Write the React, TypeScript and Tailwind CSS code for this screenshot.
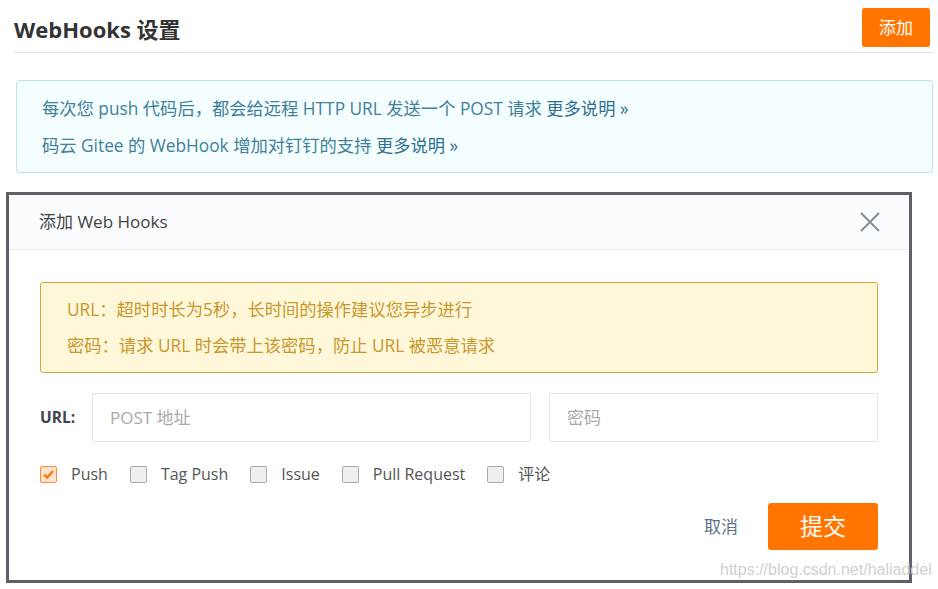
import React from "react";

const events = [
    { label: "Push", checked: true },
    { label: "Tag Push", checked: false },
    { label: "Issue", checked: false },
    { label: "Pull Request", checked: false },
    { label: "评论", checked: false },
];

function CheckBox({ checked }: { checked: boolean }) {
    if (checked) {
        return (
            <span className="flex h-[17px] w-[17px] items-center justify-center rounded-[2px] border border-[#ff8a3d] bg-[#ffe4cf]">
                <svg width="13" height="13" viewBox="0 0 13 13">
                    <polyline
                        points="2,6.5 5.2,9.6 11,3"
                        fill="none"
                        stroke="#ff7500"
                        strokeWidth="2.4"
                    />
                </svg>
            </span>
        );
    }
    return (
        <span className="block h-[17px] w-[17px] rounded-[2px] border border-[#a9a9a9] bg-[#efefef]" />
    );
}

export default function App() {
    return (
        <div
            className="relative h-[589px] w-[938px] overflow-hidden bg-white"
            style={{ fontFamily: '"Open Sans", "Noto Sans CJK SC", sans-serif' }}
        >
            <div className="ml-[14px] mr-[4px] flex items-center justify-between border-b border-[#e3e3e3] pt-[8px] pb-[5px]">
                <h1 className="pt-[3px] text-[22px] font-bold leading-none text-[#333]">
                    WebHooks 设置
                </h1>
                <button className="mr-[4px] h-[39px] w-[68px] rounded-[2px] bg-[#ff7500] text-[17px] text-white">
                    添加
                </button>
            </div>

            <div className="mt-[27px] ml-[16px] w-[917px] rounded-[3px] border border-[#c3e3ea] bg-[#f5feff] pt-[9px] pb-[8px] pl-[25px] text-[17.3px] leading-[37px] text-[#40809a]">
                <div>
                    每次您 push 代码后，都会给远程 HTTP URL 发送一个 POST 请求{" "}
                    <span className="text-[#2f7190]">更多说明 »</span>
                </div>
                <div>
                    码云 Gitee 的 WebHook 增加对钉钉的支持{" "}
                    <span className="text-[#2f7190]">更多说明 »</span>
                </div>
            </div>

            <div className="mt-[19px] ml-[6px] w-[906px] border-[3px] border-[#5f6068] bg-white">
                <div className="flex h-[55px] items-center justify-between border-b border-[#e6ebef] bg-[#fafbfc] pl-[30px] pr-[28px]">
                    <span className="text-[17px] text-[#444]">添加 Web Hooks</span>
                    <svg width="22" height="22" viewBox="0 0 22 22">
                        <path
                            d="M2 2 L20 20 M20 2 L2 20"
                            stroke="#7b8c9a"
                            strokeWidth="1.8"
                            fill="none"
                        />
                    </svg>
                </div>

                <div className="px-[31px] pt-[32px] pb-[30px]">
                    <div className="rounded-[3px] border border-[#d5a63c] bg-[#fef7da] pt-[9px] pb-[8px] pl-[26px] text-[17.3px] leading-[36px] text-[#c8982c]">
                        <div>URL：超时时长为5秒，长时间的操作建议您异步进行</div>
                        <div>密码：请求 URL 时会带上该密码，防止 URL 被恶意请求</div>
                    </div>

                    <div className="mt-[20px] flex items-center">
                        <label className="w-[52px] text-[15.5px] font-bold text-[#3d4450]">URL:</label>
                        <input
                            className="h-[49px] w-[439px] rounded-[2px] border border-[#dfe5eb] pl-[17px] text-[17px] outline-none placeholder:text-[#aaa]"
                            placeholder="POST 地址"
                        />
                        <input
                            className="ml-[18px] h-[49px] w-[329px] rounded-[2px] border border-[#dfe5eb] pl-[17px] text-[17px] outline-none placeholder:text-[#aaa]"
                            placeholder="密码"
                        />
                    </div>

                    <div className="mt-[24px] flex items-center gap-[22px]">
                        {events.map((ev, key) => (
                            <div key={key} className="flex items-center gap-[14px]">
                                <CheckBox checked={ev.checked} />
                                <span className="text-[16px] leading-[17px] text-[#555]">{ev.label}</span>
                            </div>
                        ))}
                    </div>

                    <div className="mt-[20px] flex items-center justify-end">
                        <span className="mr-[30px] text-[17px] text-[#5b7285]">取消</span>
                        <button className="h-[47px] w-[110px] rounded-[3px] bg-[#ff7500] text-[23px] text-white">
                            提交
                        </button>
                    </div>
                </div>
            </div>

            <div
                className="absolute left-[720px] top-[560px] text-[16px] leading-[20px] text-[#d0d0d0]"
                style={{ fontFamily: '"Liberation Sans", sans-serif' }}
            >
                https://blog.csdn.net/haliaddel
            </div>
        </div>
    );
}
